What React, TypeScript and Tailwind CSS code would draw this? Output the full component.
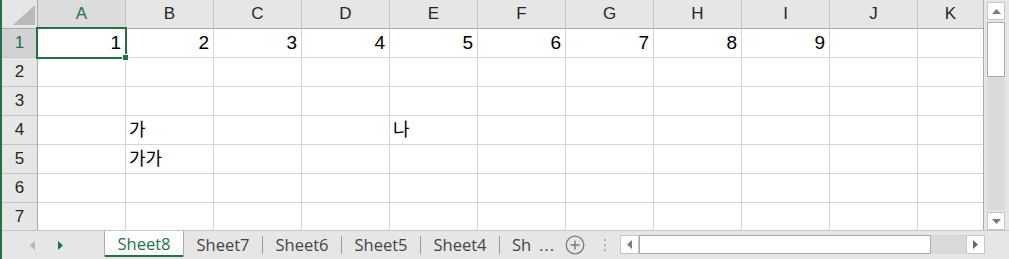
import React from 'react';

const cols = ['A', 'B', 'C', 'D', 'E', 'F', 'G', 'H', 'I', 'J', 'K'];
const rows = [1, 2, 3, 4, 5, 6, 7];

// cell values keyed by "row-colIndex"
const data: Record<string, { v: string; num?: boolean }> = {
  '1-0': { v: '1', num: true },
  '1-1': { v: '2', num: true },
  '1-2': { v: '3', num: true },
  '1-3': { v: '4', num: true },
  '1-4': { v: '5', num: true },
  '1-5': { v: '6', num: true },
  '1-6': { v: '7', num: true },
  '1-7': { v: '8', num: true },
  '1-8': { v: '9', num: true },
  '4-1': { v: '가' },
  '4-4': { v: '나' },
  '5-1': { v: '가가' },
};

const otherTabs = ['Sheet7', 'Sheet6', 'Sheet5', 'Sheet4'];

function Tri({ dir, color, w = 5, h = 9 }: { dir: 'left' | 'right' | 'up' | 'down'; color: string; w?: number; h?: number }) {
  const pts =
    dir === 'left'
      ? `${w},0 ${w},${h} 0,${h / 2}`
      : dir === 'right'
        ? `0,0 0,${h} ${w},${h / 2}`
        : dir === 'up'
          ? `0,${h} ${w},${h} ${w / 2},0`
          : `0,0 ${w},0 ${w / 2},${h}`;
  return (
    <svg width={w} height={h} viewBox={`0 0 ${w} ${h}`}>
      <polygon points={pts} fill={color} />
    </svg>
  );
}

export default function App() {
  return (
    <div className="w-[1009px] h-[259px] overflow-hidden bg-[#e6e6e6] border-l-2 border-[#217346] flex flex-col font-['Liberation_Sans','Noto_Sans_CJK_KR',sans-serif]">
      <div className="flex h-[230px]">
        {/* Grid */}
        <div className="relative w-[982px] h-[230px] overflow-hidden bg-white border-r border-[#ababab]">
          <div className="grid grid-cols-[36px_repeat(10,88px)_65px] auto-rows-[29px]">
            {/* corner */}
            <div className="relative bg-[#e6e6e6] border-r border-b border-[#ababab]">
              <svg className="absolute left-[11px] top-[5px]" width="22" height="20" viewBox="0 0 22 20">
                <polygon points="0,20 22,20 22,0" fill="#b9b9b9" />
              </svg>
            </div>
            {cols.map((c, i) => (
              <div
                key={c}
                className={`flex items-center justify-center text-[17px] border-b border-[#ababab] ${
                  i < cols.length - 1 ? 'border-r border-r-[#c4c4c4]' : ''
                } ${i === 0 ? 'bg-[#dcdcdc] text-[#217346]' : 'bg-[#e6e6e6] text-[#262626]'}`}
              >
                {c}
              </div>
            ))}
            {rows.map((r) => (
              <React.Fragment key={r}>
                <div
                  className={`flex items-center justify-center text-[17px] border-r border-[#ababab] border-b border-b-[#c4c4c4] ${
                    r === 1 ? 'bg-[#d2d2d2] text-[#217346]' : 'bg-[#e6e6e6] text-[#262626]'
                  }`}
                >
                  {r}
                </div>
                {cols.map((c, i) => {
                  const cell = data[`${r}-${i}`];
                  return (
                    <div
                      key={c}
                      className={`flex items-center border-b border-[#d4d4d4] text-black ${
                        i < cols.length - 1 ? 'border-r' : ''
                      } ${cell?.num ? 'justify-end pr-[4px] text-[19px]' : 'pl-[3px] text-[18px]'}`}
                    >
                      {cell?.v}
                    </div>
                  );
                })}
              </React.Fragment>
            ))}
          </div>
          {/* active cell */}
          <div className="absolute left-[34px] top-[27px] w-[91px] h-[32px] border-2 border-[#217346]" />
          <div className="absolute left-[120px] top-[54px] w-[7px] h-[7px] bg-[#217346] border border-white" />
        </div>

        {/* Vertical scrollbar */}
        <div className="w-[25px] pl-[3px] pt-[2px] flex flex-col gap-[2px]">
          <div className="w-[18px] h-[18px] bg-white border border-[#c6c6c6] flex items-center justify-center">
            <Tri dir="up" color="#7a7a7a" w={9} h={5} />
          </div>
          <div className="w-[18px] flex-1 bg-[#dadada] flex flex-col">
            <div className="h-[55px] bg-white border border-[#ababab]" />
          </div>
          <div className="w-[18px] h-[18px] bg-white border border-[#c6c6c6] flex items-center justify-center">
            <Tri dir="down" color="#7a7a7a" w={9} h={5} />
          </div>
        </div>
      </div>

      {/* Sheet tab bar */}
      <div className="h-[29px] border-t border-[#c6c6c6] flex items-start font-['Open_Sans','Noto_Sans',sans-serif] text-[16.5px] text-[#444]">
        <div className="w-[102px] h-[28px] flex items-center pl-[28px] gap-[23px]">
          <Tri dir="left" color="#b5b5b5" />
          <Tri dir="right" color="#217346" />
        </div>
        <div className="relative w-[80px] h-[26px] bg-white border-x border-[#ababab] flex items-center justify-center text-[#217346]">
          Sheet8
          <div className="absolute left-0 right-0 bottom-0 h-[2px] bg-[#217346]" />
        </div>
        {otherTabs.map((t, i) => (
          <div key={t} className="flex items-center h-[28px]">
            {i > 0 && <div className="w-px h-[18px] bg-[#9a9a9a]" />}
            <div className="w-[78px] flex items-center justify-center">{t}</div>
          </div>
        ))}
        <div className="flex items-center h-[28px]">
          <div className="w-px h-[18px] bg-[#9a9a9a]" />
          <span className="ml-[12px] w-[19px] overflow-hidden whitespace-nowrap">Sh</span>
          <span className="ml-[8px] text-[#217346] tracking-[1px]">...</span>
          <svg className="ml-[10px]" width="20" height="20" viewBox="0 0 20 20">
            <circle cx="10" cy="10" r="8.8" fill="none" stroke="#7b7b7b" strokeWidth="1.3" />
            <path d="M10 5.5v9M5.5 10h9" stroke="#7b7b7b" strokeWidth="1.4" />
          </svg>
          <div className="ml-[19px] flex flex-col gap-[3px]">
            <div className="w-[2px] h-[2px] bg-[#b0b0b0]" />
            <div className="w-[2px] h-[2px] bg-[#b0b0b0]" />
            <div className="w-[2px] h-[2px] bg-[#b0b0b0]" />
          </div>
        </div>
        {/* Horizontal scrollbar */}
        <div className="ml-auto mr-[24px] mt-[4px] flex h-[19px]">
          <div className="w-[19px] h-[19px] bg-white border border-[#c6c6c6] flex items-center justify-center">
            <Tri dir="left" color="#7a7a7a" w={5} h={9} />
          </div>
          <div className="w-[292px] h-[19px] bg-white border border-[#ababab]" />
          <div className="w-[35px] h-[19px] bg-[#dadada]" />
          <div className="w-[19px] h-[19px] bg-white border border-[#c6c6c6] flex items-center justify-center">
            <Tri dir="right" color="#666" w={5} h={9} />
          </div>
        </div>
      </div>
    </div>
  );
}
